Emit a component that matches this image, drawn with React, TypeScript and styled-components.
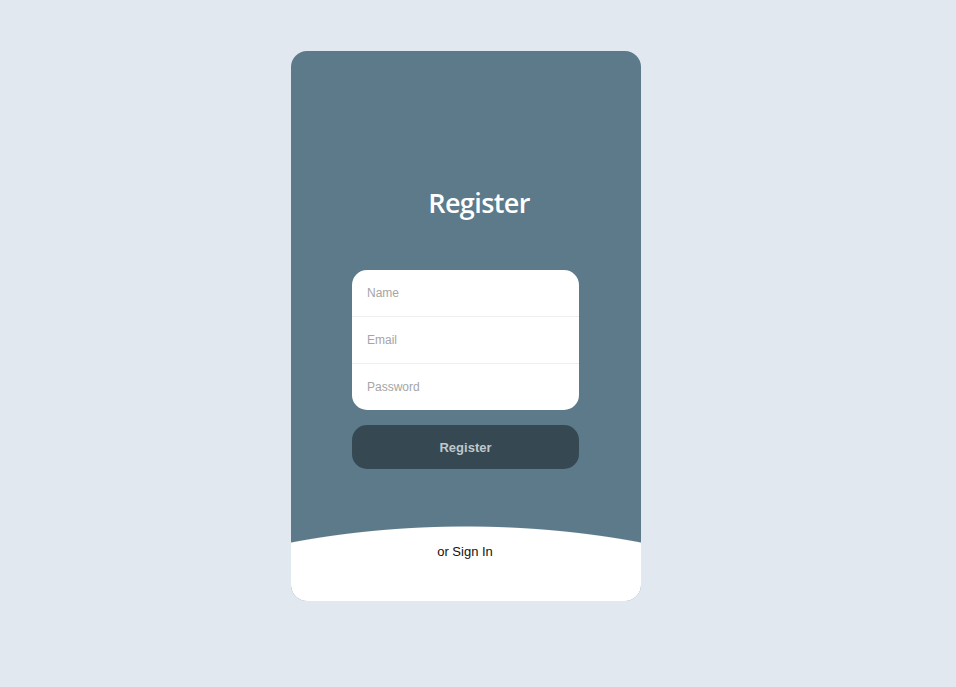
import React from "react";
import styled, { createGlobalStyle } from "styled-components";

const Global = createGlobalStyle`
  html, body { margin: 0; padding: 0; }
  body {
    background: #e1e8ef;
    font-family: "Liberation Sans", Arial, sans-serif;
    width: 956px;
    height: 687px;
    overflow: hidden;
  }
`;

const Page = styled.div`
  padding: 51px 0 0 291px;
`;

const Card = styled.div`
  width: 350px;
  height: 550px;
  background: #5c7a8a;
  border-radius: 16px;
  overflow: hidden;
  display: flex;
  flex-direction: column;
  align-items: center;
`;

const Title = styled.h1`
  margin: 132px 0 0 26px;
  font-family: "Open Sans", "Noto Sans", sans-serif;
  font-weight: 600;
  font-size: 27px;
  line-height: 40px;
  color: #ffffff;
  letter-spacing: -0.6px;
`;

const Form = styled.div`
  align-self: flex-start;
  margin: 47px 0 0 61px;
  width: 227px;
  background: #ffffff;
  border-radius: 15px;
  display: flex;
  flex-direction: column;
  overflow: hidden;
`;

const Field = styled.input<{ $last?: boolean }>`
  height: 46px;
  border: none;
  border-bottom: ${(p) => (p.$last ? "none" : "1px solid #eeeeee")};
  padding: 0 15px;
  font-family: "Liberation Sans", Arial, sans-serif;
  font-size: 12px;
  color: #333;
  outline: none;
  background: transparent;
  caret-color: #333;
  &::placeholder { color: #a5a5a5; }
`;

const Button = styled.button`
  align-self: flex-start;
  margin: 15px 0 0 61px;
  width: 227px;
  height: 44px;
  border: none;
  border-radius: 15px;
  background: #364952;
  color: #bfc8cd;
  font-family: "Liberation Sans", Arial, sans-serif;
  font-weight: 700;
  font-size: 13px;
`;

const Footer = styled.div`
  margin-top: auto;
  width: 100%;
  height: 75px;
  background: radial-gradient(ellipse 500px 253px at 50% 253px, #ffffff 99.6%, rgba(255,255,255,0) 100%);
  display: flex;
  justify-content: center;
  padding-top: 18px;
  box-sizing: border-box;
`;

const SignIn = styled.span`
  font-family: "Liberation Sans", Arial, sans-serif;
  font-size: 13px;
  color: #111;
  line-height: 15px;
  margin-left: -2px;
`;

export default function App() {
  return (
    <>
      <Global />
      <Page>
        <Card>
          <Title>Register</Title>
          <Form>
            <Field placeholder="Name" autoFocus />
            <Field placeholder="Email" />
            <Field placeholder="Password" type="password" $last />
          </Form>
          <Button>Register</Button>
          <Footer>
            <SignIn>or Sign In</SignIn>
          </Footer>
        </Card>
      </Page>
    </>
  );
}
